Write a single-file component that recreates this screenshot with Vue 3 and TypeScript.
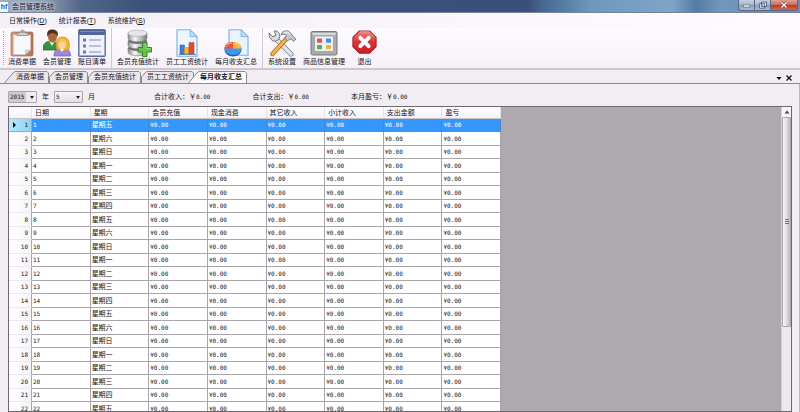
<script setup lang="ts">
import { ref } from 'vue'

interface Tool { label: string; icon: string }
interface Tab { label: string; width: number }

const menus = [
  { label: '日常操作', key: 'D' },
  { label: '统计报表', key: 'T' },
  { label: '系统维护', key: 'S' },
]

const toolGroups: Tool[][] = [
  [
    { label: '消费单据', icon: 'clipboard' },
    { label: '会员管理', icon: 'users' },
    { label: '账目清单', icon: 'list' },
  ],
  [
    { label: '会员充值统计', icon: 'database' },
    { label: '员工工资统计', icon: 'bars' },
    { label: '每月收支汇总', icon: 'pie' },
  ],
  [
    { label: '系统设置', icon: 'tools' },
    { label: '商品信息管理', icon: 'goods' },
    { label: '退出', icon: 'exit' },
  ],
]

const tabs: Tab[] = [
  { label: '消费单据', width: 39 },
  { label: '会员管理', width: 39 },
  { label: '会员充值统计', width: 53 },
  { label: '员工工资统计', width: 53 },
  { label: '每月收支汇总', width: 53 },
]
const activeTab = ref(4)

function tabPath(index: number, width: number): string {
  const right = width + 5
  const start = index === 0 || index === activeTab.value ? 'M0.5 12 L9 2 Q10 0.5 12 0.5' : 'M6.5 12 V6 L10 2 Q11 0.5 13 0.5'
  return `${start} H${right - 1} L${right + 0.5} 2 V12`
}

const year = ref('2015')
const month = ref('5')
const years = ['2013', '2014', '2015', '2016']
const months = Array.from({ length: 12 }, (_, i) => String(i + 1))

const totals = [
  { label: '合计收入', value: '0.00' },
  { label: '合计支出', value: '0.00' },
  { label: '本月盈亏', value: '0.00' },
]

const columns = ['日期', '星期', '会员充值', '现金消费', '其它收入', '小计收入', '支出金额', '盈亏']
const amounts = columns.slice(2)
const weekdays = ['日', '一', '二', '三', '四', '五', '六']
const days = Array.from({ length: 22 }, (_, i) => ({ day: i + 1, week: '星期' + weekdays[(i + 5) % 7] }))
const selected = ref(1)
</script>

<template>
  <div class="window">
    <header class="titlebar">
      <span class="logo">hf</span>
      <h1>会员管理系统</h1>
      <div class="winbtns">
        <button type="button" aria-label="最小化">
          <svg width="10" height="8" viewBox="0 0 10 8"><rect x="1.5" y="4" width="6" height="2" fill="#fff" stroke="#53607a" stroke-width=".6" /></svg>
        </button>
        <button type="button" aria-label="还原">
          <svg width="10" height="8" viewBox="0 0 10 8"><path d="M3.5 1h5v4.5h-5zM1.5 2.7h5v4.5h-5z" fill="#dbe3ee" stroke="#53607a" stroke-width=".9" /><path d="M3.5 4.2h1.5v1.4H3.500z" fill="#6d7d98" /></svg>
        </button>
        <button type="button" class="close" aria-label="关闭">
          <svg width="10" height="8" viewBox="0 0 10 8"><path d="M2.500 1.500l5 5M7.500 1.500l-5 5" stroke="#6f302f" stroke-width="2.600" /><path d="M2.500 1.500l5 5M7.500 1.500l-5 5" stroke="#fff" stroke-width="1.500" /></svg>
        </button>
      </div>
    </header>

    <nav class="menubar">
      <button v-for="m in menus" :key="m.key" type="button">{{ m.label }}(<u>{{ m.key }}</u>)</button>
    </nav>

    <div class="toolbar">
      <div v-for="(group, g) in toolGroups" :key="g" class="group">
        <button v-for="t in group" :key="t.icon" type="button" class="tool">
          <svg v-if="t.icon === 'clipboard'" viewBox="0 0 28 28">
            <defs><linearGradient id="wood" x1="0" x2="1"><stop offset="0" stop-color="#d79b7c" /><stop offset="1" stop-color="#b9714f" /></linearGradient></defs>
            <rect x="3" y="3" width="22" height="24" rx="1.500" fill="url(#wood)" stroke="#a86a4c" stroke-width=".7" />
            <path d="M5.500 6h17v15l-5 4.500h-12z" fill="#f8f9fd" stroke="#d8c9c5" stroke-width=".6" />
            <path d="M17.500 25.500V21h5z" fill="#d4d8e2" stroke="#a7a5ad" stroke-width=".5" />
            <path d="M9 6.500V4h3c0-4 5-4 5 0h3v2.500z" fill="#d2d3d9" stroke="#858690" stroke-width=".8" />
            <circle cx="14.500" cy="3" r="1" fill="#777" />
          </svg>
          <svg v-else-if="t.icon === 'users'" viewBox="0 0 28 28">
            <path d="M0 21c-.5-6 3-9 8-9s8 3 8 9z" fill="#36933c" stroke="#1f6828" stroke-width=".7" />
            <path d="M6 12l3 5 3-5z" fill="#e9efdf" />
            <ellipse cx="9.500" cy="7.500" rx="4.500" ry="6" fill="#a8683c" />
            <path d="M4.500 8C3 2 6 .5 9.500.5s6.500 2 5 7.500c-1-3-3-4-5-4S5.500 5 4.500 8z" fill="#542f1c" />
            <path d="M11 27c0-6 3-8 8.500-8s8 3 8 8z" fill="#9c89dc" stroke="#685ab0" stroke-width=".7" />
            <path d="M13.500 20c-1.500-8 1-12 6-12s8 4 6.500 12c-3 2-9 2-12.500 0z" fill="#efb23a" stroke="#c78723" stroke-width=".7" />
            <ellipse cx="19" cy="15.500" rx="3.700" ry="5" fill="#f8d4a3" />
            <path d="M14.500 15c1-5 5-6 8.500-3l1 4c-3-1-4-3-5-4-1 2-2 3-4.500 3z" fill="#f7c955" />
            <path d="M17 20l2 3 2-3z" fill="#fff" />
          </svg>
          <svg v-else-if="t.icon === 'list'" viewBox="0 0 28 28">
            <rect x=".8" y=".8" width="26.400" height="26.400" rx="1" fill="#eff1fb" stroke="#5a6b9d" stroke-width="1.400" />
            <path d="M1 1h26v5H1z" fill="#5064a0" />
            <path d="M2 2h24v1H2z" fill="#7888ba" />
            <path d="M5 9.500h3v3H5zM5 15.500h3v3H5zM5 21.500h3v3H5z" fill="#6479b5" />
            <path d="M11 11h12M11 17h12M11 23h12" stroke="#a7afd0" stroke-width="1.500" />
          </svg>
          <svg v-else-if="t.icon === 'database'" viewBox="0 0 28 28">
            <defs><linearGradient id="metal" x1="0" x2="1"><stop offset="0" stop-color="#8b8c8e" /><stop offset=".35" stop-color="#f7f7f8" /><stop offset=".7" stop-color="#b5b6b8" /><stop offset="1" stop-color="#747578" /></linearGradient></defs>
            <path d="M4 19v4c0 5 19 5 19 0v-4z" fill="url(#metal)" stroke="#7c7d80" stroke-width=".6" />
            <ellipse cx="13.500" cy="19" rx="9.500" ry="3" fill="#707174" />
            <path d="M4 12v4c0 5 19 5 19 0v-4z" fill="url(#metal)" stroke="#7c7d80" stroke-width=".6" />
            <ellipse cx="13.500" cy="12" rx="9.500" ry="3" fill="#707174" />
            <path d="M4 4v5c0 5 19 5 19 0V4z" fill="url(#metal)" stroke="#7c7d80" stroke-width=".6" />
            <ellipse cx="13.500" cy="4.200" rx="9.500" ry="3.200" fill="#e6e7e8" stroke="#a0a1a4" stroke-width=".6" />
            <path d="M18.500 14h4.500v4.500h4.500V23H23v4.500h-4.500V23H14v-4.500h4.500z" fill="#66c24a" stroke="#348a25" />
            <path d="M19.500 15h2.500v4.500h4.500" fill="none" stroke="#a9e28e" stroke-width=".8" />
          </svg>
          <svg v-else-if="t.icon === 'bars'" viewBox="0 0 28 28">
            <path d="M4 .7h13l7 7v19.600H4z" fill="#edf5fe" stroke="#74aee4" stroke-width="1.100" />
            <path d="M17 .7v7h7z" fill="#bddaf6" stroke="#74aee4" stroke-width=".8" />
            <path d="M7 16h4.500v9H7z" fill="#3f7fd3" stroke="#2a5dae" stroke-width=".5" />
            <path d="M11.500 18.500h4.500V25h-4.500z" fill="#f5b52e" stroke="#ca861e" stroke-width=".5" />
            <path d="M16 13.500h5V25h-5z" fill="#e14c36" stroke="#ac3020" stroke-width=".5" />
            <path d="M6 25.500h17" stroke="#6d7f9b" />
          </svg>
          <svg v-else-if="t.icon === 'pie'" viewBox="0 0 28 28">
            <path d="M7 .7h12l7 7v18.600H7z" fill="#e9f3fe" stroke="#74aee4" stroke-width="1.100" />
            <path d="M19 .7v7h7z" fill="#bddaf6" stroke="#74aee4" stroke-width=".8" />
            <ellipse cx="11" cy="21" rx="8.500" ry="6.500" fill="#255cae" />
            <ellipse cx="11" cy="19.500" rx="8.500" ry="6.500" fill="#4296ed" />
            <path d="M11 19.500H2.500c0-4 3.500-6.500 8.500-6.500z" fill="#f15235" />
            <path d="M11 19.500V13c5 0 8.500 2.500 8.500 6.500z" fill="#ffb736" />
            <path d="M4 18c1-2.500 3.500-4 6-4M13 14.200c3 .5 4.500 1.800 5 3.300" fill="none" stroke="#ffd49b" stroke-width=".8" />
          </svg>
          <svg v-else-if="t.icon === 'tools'" viewBox="0 0 28 28">
            <path d="M7 9l16 16" stroke="#7d8087" stroke-width="5" stroke-linecap="round" />
            <path d="M7 9l16 16" stroke="#e3e4e9" stroke-width="3.400" stroke-linecap="round" />
            <path d="M1 4l4 4 3-2-2-4c5-1 8 5 4 9-4 3-9 0-9-7z" fill="#d9dbe1" stroke="#74777f" />
            <path d="M20 8L4.500 25" stroke="#b56a17" stroke-width="4.400" stroke-linecap="round" />
            <path d="M20 8L4.500 25" stroke="#f4b547" stroke-width="2.700" stroke-linecap="round" />
            <path d="M13.500 4c3-3 7-3 9 0l4 5 1.500 1-2.500 2.500-1.500-2-2-.5-2.500 2-3-3 2-2c-1.500-2-3-2-5-1z" fill="#c4c7ce" stroke="#666a73" stroke-width=".8" />
            <path d="M16 3.500c3-1 4.500 0 6 2" fill="none" stroke="#fff" />
          </svg>
          <svg v-else-if="t.icon === 'goods'" viewBox="0 0 28 28">
            <rect x="1" y="2.500" width="26" height="23.500" rx="1.500" fill="#aaabae" stroke="#77787b" />
            <path d="M2.500 4h23v2h-23z" fill="#d8d9db" />
            <rect x="4.500" y="7" width="19" height="15.500" rx="1" fill="#e8f0f4" stroke="#939599" stroke-width=".7" />
            <rect x="7" y="9.500" width="5" height="4.200" rx=".8" fill="#df5947" />
            <rect x="16" y="9.500" width="5" height="4.200" rx=".8" fill="#528bd5" />
            <rect x="7" y="16" width="5" height="4.200" rx=".8" fill="#62ae45" />
            <rect x="16" y="16" width="5" height="4.200" rx=".8" fill="#ecb832" />
          </svg>
          <svg v-else class="narrow" viewBox="0.500 0.500 27 28">
            <defs><linearGradient id="stop" x2="0" y2="1"><stop offset="0" stop-color="#ee8583" /><stop offset=".5" stop-color="#d93535" /><stop offset="1" stop-color="#c71e23" /></linearGradient></defs>
            <path d="M8.500 1.500h11l7 7v10l-7 7h-11l-7-7v-10z" fill="url(#stop)" stroke="#aa2228" stroke-width="1.200" stroke-linejoin="round" />
            <path d="M9 2.500h10l6 6" fill="none" stroke="#f8aaa7" stroke-width=".8" />
            <path d="M9.500 9l9 9M18.500 9l-9 9" stroke="#fff" stroke-width="4.200" stroke-linecap="round" />
          </svg>
          <span>{{ t.label }}</span>
        </button>
      </div>
    </div>

    <div class="tabstrip">
      <div class="tabs" role="tablist">
        <button
          v-for="(t, i) in tabs" :key="t.label" type="button" role="tab"
          :aria-selected="i === activeTab" :class="['tab', { active: i === activeTab }]" @click="activeTab = i"
        >
          <svg :width="t.width + 6" height="12" aria-hidden="true"><path :d="tabPath(i, t.width)" /></svg>
          <span>{{ t.label }}</span>
        </button>
      </div>
      <button type="button" class="stripbtn" aria-label="窗口列表"><svg width="8" height="8" viewBox="0 0 8 8"><path d="M1.500 3h5L4 6z" /></svg></button>
      <button type="button" class="stripbtn" aria-label="关闭标签"><svg width="8" height="8" viewBox="0 0 8 8"><path d="M1.500 1.500l5 5M6.500 1.500l-5 5" stroke="#111" stroke-width="1.300" /></svg></button>
    </div>

    <main class="page">
      <form class="filters" @submit.prevent>
        <div class="period">
          <span class="combo"><select id="year" v-model="year" class="marked"><option v-for="y in years" :key="y">{{ y }}</option></select></span>
          <label for="year">年</label>
          <span class="combo"><select id="month" v-model="month"><option v-for="m in months" :key="m">{{ m }}</option></select></span>
          <label for="month">月</label>
        </div>
        <div class="totals">
          <span v-for="t in totals" :key="t.label">{{ t.label }}：￥<b>{{ t.value }}</b></span>
        </div>
      </form>

      <div class="gridbox">
        <div class="gridview">
          <table>
            <thead>
              <tr><th class="rowhead"></th><th v-for="c in columns" :key="c">{{ c }}</th></tr>
            </thead>
            <tbody>
              <tr v-for="d in days" :key="d.day" :class="{ selected: d.day === selected }" @click="selected = d.day">
                <th class="rowhead" scope="row"><div><i></i>{{ d.day }}</div></th>
                <td class="num">{{ d.day }}</td>
                <td>{{ d.week }}</td>
                <td v-for="a in amounts" :key="a" class="num">¥0.00</td>
              </tr>
            </tbody>
          </table>
        </div>
        <div class="scrollbar">
          <button type="button" aria-label="向上滚动"><svg width="6" height="6" viewBox="0 0 6 6"><path d="M.5 4.500L3 1.500l2.500 3z" fill="#444" /></svg></button>
          <div class="thumb"><i></i></div>
        </div>
      </div>
    </main>
  </div>
</template>

<style>
body { margin: 0; overflow: hidden; }
</style>

<style scoped>
* { box-sizing: border-box; }
.window {
  height: 100vh;
  display: flex;
  flex-direction: column;
  background: #f2edf3;
  color: #161418;
  font: 7px/10px "Liberation Sans", "Noto Sans CJK SC", sans-serif;
}
button { margin: 0; padding: 0; border: 0; background: none; font: inherit; color: inherit; }
svg { display: block; }

.titlebar {
  flex: none;
  height: 13px;
  display: flex;
  gap: 4px;
  padding-right: 2px;
  border-bottom: 1px solid #77839b;
  background: linear-gradient(90deg, #a3adbf 0, #8a98ae 6%, #52668a 10%, #3c5179 18%, #3b5078 66%, #466a93 68%, #6d99bd 74%, #7fa4c6 84%, #547ba4 87%, #7297bb 90%, #6b8eb4 100%);
}
.logo {
  width: 8px;
  height: 10px;
  margin-top: 2px;
  background: #f4f8ff;
  color: #1c5fae;
  font-weight: bold;
  text-align: center;
}
h1 {
  flex: 1;
  margin: 0;
  font: inherit;
  line-height: 13px;
  text-shadow: 0 0 3px #e6ebf3, 0 0 5px #dbe2ec;
}
.winbtns { display: flex; height: 11px; }
.winbtns button {
  width: 16px;
  display: grid;
  place-items: center;
  border: solid #566a87;
  border-width: 0 0 1px 1px;
  background: linear-gradient(#c3d0df, #a7b7cb 45%, #8799b1 50%, #abbdd2);
}
.winbtns button:first-child { border-bottom-left-radius: 3px; }
.winbtns .close {
  width: 28px;
  border-right-width: 1px;
  border-bottom-right-radius: 3px;
  background: linear-gradient(#dfa093, #d06f60 45%, #b93527 50%, #d56a4d);
}

.menubar {
  flex: none;
  height: 15px;
  display: flex;
  align-items: center;
  gap: 12px;
  padding-left: 9px;
  background: linear-gradient(90deg, #f4f0f6, #faf7fc 60%, #fdfbfe);
}

.toolbar {
  flex: none;
  height: 42px;
  display: flex;
  padding-left: 3px;
  border-bottom: 2px solid #cdc7cf;
  background: linear-gradient(#fdfbfe, #f9f5fb 60%, #f4f0f6);
}
.toolbar::before { content: ""; margin: 3px 4px 3px 0; border-left: 1px dotted #aaa5ad; }
.group { display: flex; gap: 7px; }
.group + .group { padding-left: 5px; margin-left: 5px; border-left: 1px solid #cfcad2; }
.tool { display: flex; flex-direction: column; align-items: center; white-space: nowrap; }
.tool svg { width: 28px; height: 28px; margin-top: 1px; }
.tool .narrow { width: 25px; }

.tabstrip {
  flex: none;
  height: 14px;
  display: flex;
  align-items: flex-end;
  padding-right: 5px;
  border-bottom: 1px solid #8e898f;
}
.tabs { flex: 1; display: flex; padding-left: 10px; }
.tab { position: relative; height: 12px; padding: 0 5px 0 6px; white-space: nowrap; }
.tab span { position: relative; }
.tab svg { position: absolute; top: 0; left: -6px; overflow: visible; }
.tab path { fill: #ebe6ec; stroke: #8e898f; }
.tab.active { z-index: 1; font-weight: bold; }
.tab.active path { fill: #fdfbfe; }
.stripbtn { width: 10px; height: 11px; }

.page {
  flex: 1;
  min-height: 0;
  display: flex;
  flex-direction: column;
  padding: 0 7px 0 8px;
  border-right: 1px solid #bdb8bf;
}
.filters { flex: none; height: 22px; display: flex; align-items: center; padding-top: 4px; }
.period { display: flex; align-items: center; gap: 5px; width: 146px; }
.combo { position: relative; display: flex; }
.combo::after {
  content: "";
  position: absolute;
  right: 3px;
  top: 5px;
  border: solid transparent;
  border-width: 3px 2px 0;
  border-top-color: #222;
  pointer-events: none;
}
select {
  appearance: none;
  width: 29px;
  height: 12px;
  margin: 0;
  padding: 0 0 0 1px;
  border: 1px solid #aaa5ac;
  border-radius: 1px;
  background: linear-gradient(#f7f5f8, #e2dfe3);
  color: inherit;
  font: 6px/10px "DejaVu Sans Mono", monospace;
}
select.marked { background: linear-gradient(90deg, #cfcad1 17px, #efecf0 17px); }
.totals { display: flex; gap: 42px; }
.totals b { font: 6px/10px "DejaVu Sans Mono", monospace; }

.gridbox {
  flex: 1;
  min-height: 0;
  display: flex;
  border: 1px solid #6d696f;
  background: #aea9ae;
}
.gridview { flex: 1; min-width: 0; overflow: hidden; }
table { width: 492px; table-layout: fixed; border-collapse: separate; border-spacing: 0; background: #fff; }
th, td { padding: 0 1px; font-weight: normal; text-align: left; white-space: nowrap; overflow: hidden; }
tr { height: 13px; line-height: 12px; }
tbody tr:nth-child(even) { height: 14px; line-height: 13px; }
thead tr { height: 12px; line-height: 11px; }
thead th { padding-left: 3px; border-right: 1px solid #e3e0e6; border-bottom: 1px solid #c6c2c9; background: linear-gradient(#fff, #f3f2f7); }
td { border-right: 1px solid #aaa5ac; border-bottom: 1px solid #aaa5ac; }
.num, tbody .rowhead { font-family: "DejaVu Sans Mono", monospace; font-size: 6px; }
.rowhead { width: 23px; }
tbody .rowhead { padding: 0 3px 0 4px; border-right: 1px solid #aaa5ac; border-bottom: 1px solid #ebe9ef; background: linear-gradient(90deg, #fff, #f5f4f9); }
.rowhead div { display: flex; align-items: center; justify-content: space-between; }
.rowhead i { border: solid transparent; border-width: 3px 0 3px 3px; }
.selected td { background: #3497fb; color: #fff; border-color: #3497fb; border-right-color: #4a87c9; }
.selected .rowhead { background: linear-gradient(90deg, #b9e6fa, #8cd3f4); border-color: #6bb7dc; }
.selected .rowhead i { border-left-color: #111; }

.scrollbar { width: 10px; display: flex; flex-direction: column; background: #ece8ee; border-left: 1px solid #d6d1d8; }
.scrollbar button { flex: none; height: 10px; display: grid; place-items: center; background: #f8f5f9; }
.thumb {
  height: 69%;
  display: grid;
  place-items: center;
  border: 1px solid #aaa5ac;
  border-radius: 1px;
  background: linear-gradient(90deg, #f9f7fa, #e4e0e6 45%, #bfbac1);
}
.thumb i { width: 4px; height: 5px; border: solid #77727a; border-width: 1px 0; background: linear-gradient(transparent 1px, #77727a 1px, #77727a 2px, transparent 2px); }
</style>
